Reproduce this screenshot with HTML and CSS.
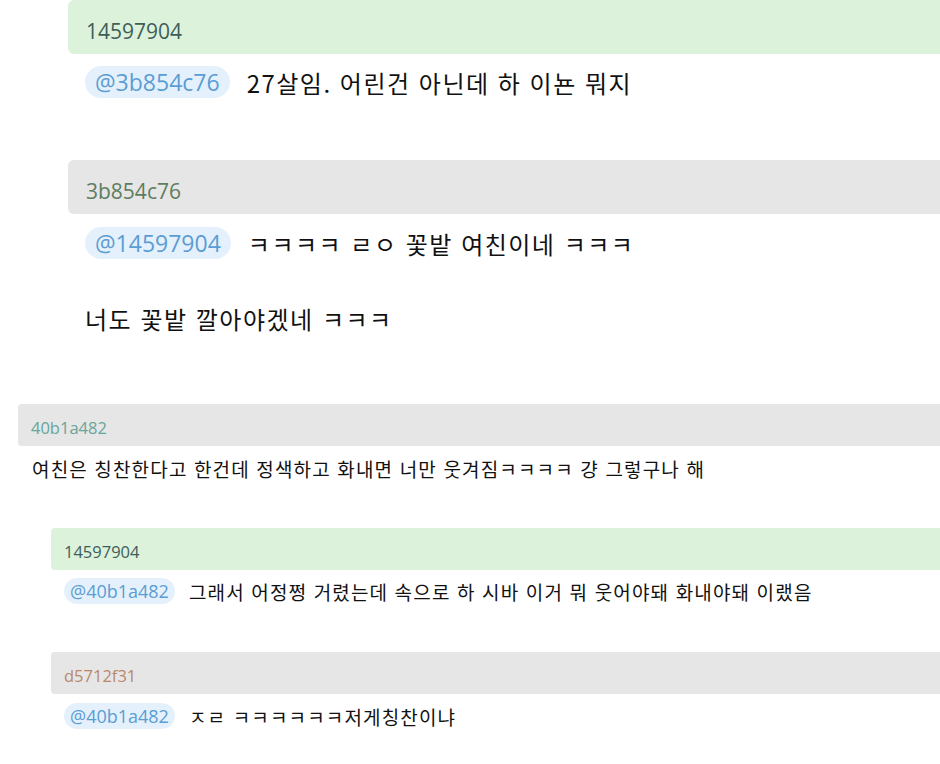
FILE: index.html
```html
<!DOCTYPE html>
<html lang="ko">
<head>
    <meta charset="UTF-8">
    <meta name="viewport" content="width=device-width, initial-scale=1.0">
    <title>댓글</title>
    <link rel="stylesheet" href="styles.css">
</head>
<body>
    <div class="thread thread-lg">
        <div class="comment">
            <div class="author author-me">14597904</div>
            <div class="body">
                <p><span class="mention">@3b854c76</span>27살임. 어린건 아닌데 하 이뇬 뭐지</p>
            </div>
        </div>
        <div class="comment">
            <div class="author author-other"><span class="name-green">3b854c76</span></div>
            <div class="body">
                <p><span class="mention">@14597904</span>ㅋㅋㅋㅋ ㄹㅇ 꽃밭 여친이네 ㅋㅋㅋ</p>
                <p>너도 꽃밭 깔아야겠네 ㅋㅋㅋ</p>
            </div>
        </div>
    </div>

    <div class="thread thread-sm">
        <div class="comment">
            <div class="author author-other"><span class="name-teal">40b1a482</span></div>
            <div class="body">
                <p>여친은 칭찬한다고 한건데 정색하고 화내면 너만 웃겨짐ㅋㅋㅋㅋ 걍 그렇구나 해</p>
            </div>
        </div>
        <div class="replies">
            <div class="comment">
                <div class="author author-me">14597904</div>
                <div class="body">
                    <p><span class="mention">@40b1a482</span>그래서 어정쩡 거렸는데 속으로 하 시바 이거 뭐 웃어야돼 화내야돼 이랬음</p>
                </div>
            </div>
            <div class="comment">
                <div class="author author-other"><span class="name-brown">d5712f31</span></div>
                <div class="body">
                    <p><span class="mention">@40b1a482</span>ㅈㄹ ㅋㅋㅋㅋㅋㅋ저게칭찬이냐</p>
                </div>
            </div>
        </div>
    </div>
</body>
</html>
```

FILE: styles.css
```css
* { box-sizing: border-box; margin: 0; padding: 0; }
body {
    background: #ffffff;
    color: #111;
    font-family: "Noto Sans CJK KR", "Open Sans", sans-serif;
    overflow: hidden;
}
.author {
    display: flex;
    align-items: center;
    font-family: "Open Sans", "Noto Sans CJK KR", sans-serif;
    color: #3e5e5b;
}
.author-me { background: #dcf2da; }
.author-other { background: #e6e6e6; }
.name-green { color: #5e7d5f; }
.name-teal { color: #68a59a; }
.name-brown { color: #b9886b; }
.body p {
    display: flex;
    align-items: center;
    white-space: nowrap;
}
.mention {
    font-family: "Open Sans", "Noto Sans CJK KR", sans-serif;
    background: #e4f1fc;
    color: #5b9dd3;
    letter-spacing: 0;
}

/* large part */
.thread-lg { margin-left: 68px; margin-bottom: 70px; }
.thread-lg .author {
    height: 54px;
    padding: 7px 0 0 18px;
    font-size: 21px;
    border-radius: 6px 0 0 6px;
}
.thread-lg .body {
    padding-left: 17px;
    margin-top: 12px;
    font-size: 24px;
    letter-spacing: 1.5px;
}
.thread-lg .body p { height: 32px; }
.thread-lg .body p + p { margin-top: 43px; }
.thread-lg .mention {
    font-size: 23px;
    height: 32px;
    line-height: 32px;
    padding: 0 10px;
    border-radius: 16px;
    margin-right: 17px;
}
.thread-lg .comment:first-child { margin-bottom: 62px; }
.thread-lg .comment:nth-child(2) .body { margin-top: 13px; }

/* small part */
.thread-sm { margin-left: 18px; }
.thread-sm .author {
    height: 42px;
    padding: 5px 0 0 13px;
    font-size: 16.5px;
    border-radius: 4px 0 0 4px;
}
.thread-sm .body {
    padding-left: 14px;
    margin-top: 9px;
    font-size: 19px;
    letter-spacing: 1.15px;
}
.thread-sm .body p { height: 26px; }
.thread-sm > .comment { margin-bottom: 47px; }
.replies { margin-left: 33px; }
.replies .comment:first-child { margin-bottom: 48px; }
.replies .comment:first-child .body { margin-top: 8px; }
.replies .body { padding-left: 13px; }
.thread-sm .mention {
    font-size: 18px;
    height: 26px;
    line-height: 26px;
    padding: 0 6px;
    border-radius: 13px;
    margin-right: 14px;
}
```
